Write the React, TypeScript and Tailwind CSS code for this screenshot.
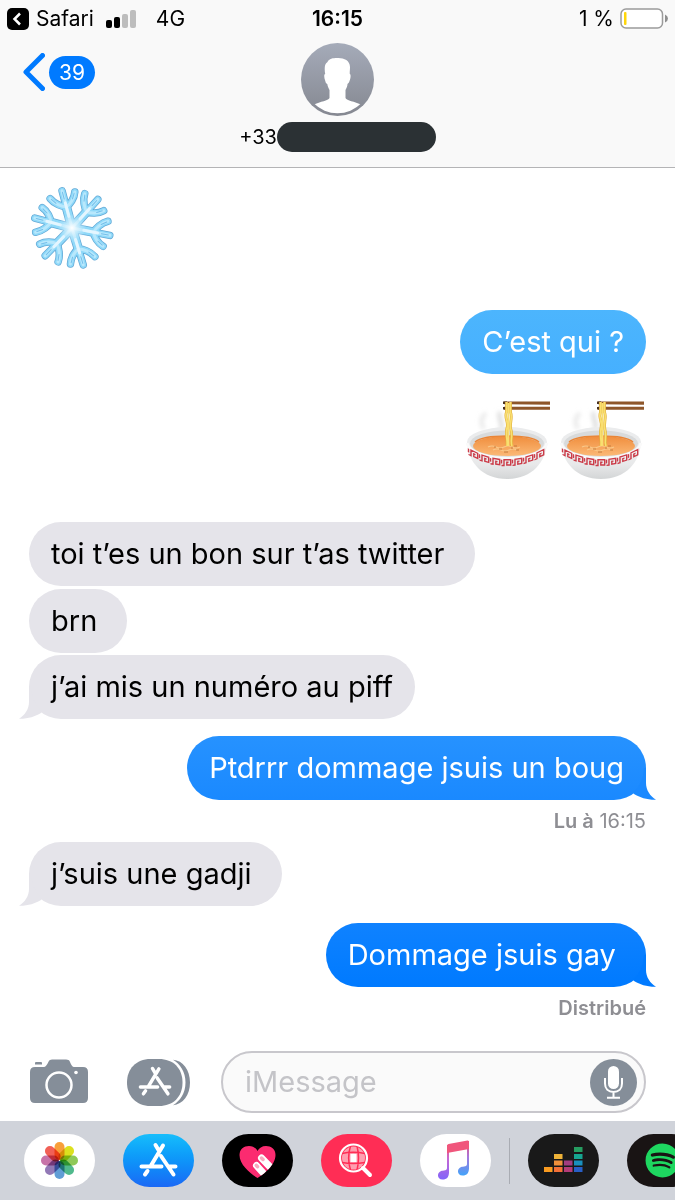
import type { ReactNode } from 'react';
import { FaSpotify } from 'react-icons/fa';

type Message = {
  text: string;
  mine?: boolean;
  tail?: boolean;
  color: string;
  tailColor?: string;
  spacing: string;
  receipt?: ReactNode;
};

// a trailing space typed by the sender is kept, it widens the bubble
const messages: Message[] = [
  { text: 'toi t’es un bon sur t’as twitter ', color: 'bg-[#e5e4ea] text-black', spacing: 'mt-[42px]' },
  { text: 'brn ', color: 'bg-[#e5e4ea] text-black', spacing: 'mt-[3px]' },
  {
    text: 'j’ai mis un numéro au piff',
    tail: true,
    color: 'bg-[#e5e4ea] text-black',
    tailColor: 'text-[#e5e4ea]',
    spacing: 'mt-[2px]',
  },
  {
    text: 'Ptdrrr dommage jsuis un boug',
    mine: true,
    tail: true,
    color: 'bg-linear-to-b from-[#2692ff] to-[#1a89ff] text-white',
    tailColor: 'text-[#1a89ff]',
    spacing: 'mt-[17px]',
    receipt: (
      <>
        <span className="font-semibold">Lu à</span> 16:15
      </>
    ),
  },
  {
    text: 'j’suis une gadji ',
    tail: true,
    color: 'bg-[#e5e4ea] text-black',
    tailColor: 'text-[#e5e4ea]',
    spacing: 'mt-0',
  },
  {
    text: 'Dommage jsuis gay ',
    mine: true,
    tail: true,
    color: 'bg-linear-to-b from-[#0f82ff] to-[#007aff] text-white',
    tailColor: 'text-[#007aff]',
    spacing: 'mt-[17px]',
    receipt: <span className="font-semibold">Distribué</span>,
  },
];

function Bubble({ text, mine, tail, color, tailColor }: Message) {
  return (
    <div className={`relative h-16 rounded-[32px] px-[22px] text-[29px] leading-[64px] whitespace-pre ${color}`}>
      {tail && (
        <svg
          viewBox="0 0 24 32"
          className={`absolute bottom-0 h-8 w-6 ${mine ? '-right-[10px]' : '-left-[10px] -scale-x-100'} ${tailColor}`}
          fill="currentColor"
          aria-hidden="true"
        >
          <path d="M14 0V15C14 22 18 28 24 31.8C15 32 8 29.5 2 26L1 25Q11 16 12 0Z" />
        </svg>
      )}
      <span className="relative">{text}</span>
    </div>
  );
}

function Snowflake() {
  const arms = [-15, 42, 101, 163, 224, 285];
  const arm = 'M0 0V-38.500M0-22C-4-23-11-28-13.500-34M0-22C4-23 10-28 12-34';
  return (
    <svg viewBox="-43 -43 86 86" className="h-[86px] w-[86px]" fill="none" strokeLinecap="round" role="img" aria-label="Flocon">
      <defs>
        <radialGradient id="snow-glow">
          <stop offset="0" stopColor="#ffffff" />
          <stop offset="1" stopColor="#c4e9fc" stopOpacity="0" />
        </radialGradient>
      </defs>
      {arms.map((a) => (
        <g key={a} transform={`rotate(${a})`} stroke="#63a9d6">
          <path d={arm} strokeWidth="7.500" />
          <path d="M0 0V-22" strokeWidth="9.500" />
        </g>
      ))}
      {arms.map((a) => (
        <g key={a} transform={`rotate(${a})`} stroke="#8fd9f9">
          <path d={arm} strokeWidth="6" />
          <path d="M0 0V-22" strokeWidth="8" />
        </g>
      ))}
      {arms.map((a) => (
        <g key={a} transform={`rotate(${a})`}>
          <path d={arm} stroke="#b9e8fc" strokeWidth="3" />
          <path d="M0-12V-26" stroke="#e4f6ff" strokeWidth="3" />
          <path d="M0-30V-37M-9-28L-12.500-33M8-28L11-33" stroke="#74bfea" strokeWidth="1" />
        </g>
      ))}
      <circle r="15" fill="url(#snow-glow)" />
    </svg>
  );
}

function Ramen({ id }: { id: string }) {
  const pattern = [-33, -22, -11, 0, 11, 22, 33];
  return (
    <svg viewBox="0 0 86 80" className="h-20 w-[86px]" fill="none" role="img" aria-label="Ramen">
      <defs>
        <linearGradient id={`${id}-bowl`} x1="0" y1="0" x2="0" y2="1">
          <stop offset="0" stopColor="#f0f0f0" />
          <stop offset="0.6" stopColor="#e8e9ea" />
          <stop offset="1" stopColor="#d3d5d6" />
        </linearGradient>
        <linearGradient id={`${id}-soup`} x1="0" y1="0" x2="0" y2="1">
          <stop offset="0" stopColor="#f08d3c" />
          <stop offset="1" stopColor="#fbb977" />
        </linearGradient>
        <filter id={`${id}-blur`} x="-50%" y="-50%" width="200%" height="200%">
          <feGaussianBlur stdDeviation="2" />
        </filter>
      </defs>
      <g filter={`url(#${id}-blur)`} stroke="#dcdcdc" strokeWidth="4">
        <path d="M20 13C14 18 15 24 18 29" opacity="0.6" />
        <path d="M34 12C31 18 38 22 35 30" />
      </g>
      <path d="M1 42C2 62 16 79 41 79S80 62 81 42Z" fill={`url(#${id}-bowl)`} />
      <ellipse cx="41" cy="42" rx="40" ry="15" fill="#ebeced" />
      <ellipse cx="41" cy="43.500" rx="37" ry="13" fill="#d8dadb" />
      <ellipse cx="41" cy="46" rx="34" ry="10" fill={`url(#${id}-soup)`} />
      <path d="M9 42C18 34 64 34 73 42" stroke="#ea8536" strokeWidth="1.500" />
      <path
        d="M22 47q4-2 8 0t8 0t8 0t8 0M27 50q4-2 8 0t8 0t8 0"
        stroke="#f9c98a"
        strokeWidth="1.200"
      />
      <path d="M28 47h2M33 49h3M48 46h3M50 50h3M38 52h4M45 48h2" stroke="#c47b3a" strokeWidth="1" />
      <path d="M1 43C3 52 20 58.500 41 58.500S79 52 81 43" stroke="#fafafa" strokeWidth="3" />
      {pattern.map((x) => (
        <path
          key={x}
          transform={`translate(${41 + x} ${62.5 - (x * x) / 130}) skewY(${-x * 0.8})`}
          d="M-5.500 3H-3V-2.700H3.700V2.500H-0.200V-.2H1.500M-5.500-2.700V1"
          stroke="#cb3b48"
          strokeWidth="1.400"
        />
      ))}
      <path d="M38 1.500H84V4.700L38 4.200ZM38 6.700H84V9.700H38Z" fill="#8e562a" />
      <path d="M37 2.800h4M37 8.200h4" stroke="#49311f" strokeWidth="2.500" />
      <path
        d="M40.500 2V12C38 18 43 22 41 28C39 35 42 39 41 46M44.500 2V12C47 18 43 24 45 30C47 36 44 41 46 46"
        stroke="#e1ac37"
        strokeWidth="2.800"
      />
      <path
        d="M40.500 2V12C38 18 43 22 41 28C39 35 42 39 41 46M44.500 2V12C47 18 43 24 45 30C47 36 44 41 46 46M42.500 3V46"
        stroke="#f9df70"
        strokeWidth="1.700"
      />
    </svg>
  );
}

function Avatar() {
  return (
    <svg viewBox="0 0 73 73" className="h-[73px] w-[73px]" aria-hidden="true">
      <defs>
        <linearGradient id="avatar-bg" x1="0" y1="0" x2="0" y2="1">
          <stop offset="0" stopColor="#a5abb9" />
          <stop offset="1" stopColor="#858891" />
        </linearGradient>
        <clipPath id="avatar-clip">
          <circle cx="36.5" cy="36.5" r="33.7" />
        </clipPath>
      </defs>
      <circle cx="36.5" cy="36.5" r="36.5" fill="url(#avatar-bg)" />
      <path
        clipPath="url(#avatar-clip)"
        fill="#fff"
        d="M36 15C42 14.5 49 17 49 24C49 27 48.6 29 48.8 31C50 31 49.8 35 48.5 38C48 40 47 40.5 46.5 41C46.5 43 45.5 45 44.5 47V55C46 58 53 58 61 62L68 73H4L12 62C20 58 27 58 28.5 55V47C27.5 45 26.5 43 26.3 41C25 40.5 24.8 40 24.3 38C23 35 22.8 31 24.2 31C23.5 27 23 21 26.5 19C28 15.5 32 15 36 15Z"
      />
    </svg>
  );
}

function AppStoreGlyph() {
  return (
    <path
      d="M40 11.5L28 31.5M32.5 11L35.5 16M38 22L50.5 40.5M24.5 37L22 40.5M18.5 32.5H38.5M46 32.5H52.5"
      stroke="#fff"
      strokeWidth="4"
      strokeLinecap="round"
      fill="none"
    />
  );
}

function CameraIcon() {
  return (
    <svg viewBox="0 0 58 46" className="h-[46px] w-[58px]" fill="#858e99" aria-hidden="true">
      <path d="M6 3H11Q12 3 12 4V5.500H5V4Q5 3 6 3Z" />
      <path d="M5 8H14C17 8 18 2 20 1Q21 .5 22 .5H36Q37.5 .5 38.5 1C40.5 2 41 8 44 8H53Q58 8 58 13V39Q58 44 53 44H5Q0 44 0 39V13Q0 8 5 8Z" />
      <circle cx="29" cy="26" r="12.5" fill="none" stroke="#fff" strokeWidth="2.5" />
      <circle cx="46" cy="13.5" r="1.8" fill="#fff" />
    </svg>
  );
}

function AppsIcon() {
  return (
    <svg viewBox="0 0 63 47" className="h-[47px] w-[63px]" aria-hidden="true">
      <path d="M46 0.8C56 1.5 63 11 63 23.5S56 45.5 46 46.2C53 42 58.5 34 58.5 23.5S53 5 46 0.8Z" fill="#858e99" />
      <path d="M23.5 0H32C46 0 55.5 9 55.5 23.5S46 47 32 47H23.5C9 47 0 37 0 23.5S9 0 23.5 0Z" fill="#858e99" />
      <g transform="translate(-2.5 0) scale(0.86)">
        <AppStoreGlyph />
      </g>
    </svg>
  );
}

function MicIcon() {
  return (
    <svg viewBox="0 0 47 47" className="h-[47px] w-[47px]" fill="none" stroke="#fff" aria-hidden="true">
      <circle cx="23.5" cy="23.5" r="23.5" fill="#858e99" stroke="none" />
      <rect x="18" y="7" width="11" height="23" rx="5.5" fill="#fff" stroke="none" />
      <path d="M15 19V24.5C15 30 18.5 33 23.5 33S32 30 32 24.5V19M23.5 33V38.5M17 38.8H30" strokeWidth="2" />
    </svg>
  );
}

function PhotosIcon() {
  const petals = ['#f8921e', '#d8dc00', '#7fc241', '#37b07c', '#4a90d0', '#8366ac', '#c0609c', '#f04a3e'];
  return (
    <svg viewBox="0 0 71 53" className="h-full w-full" aria-hidden="true">
      {petals.map((fill, i) => (
        <rect
          key={fill}
          x="30.5"
          y="8"
          width="10"
          height="18"
          rx="5"
          fill={fill}
          opacity="0.88"
          className="mix-blend-multiply"
          transform={`rotate(${i * 45} 35.5 26.5)`}
        />
      ))}
    </svg>
  );
}

function HeartIcon() {
  return (
    <svg viewBox="0 0 71 53" className="h-full w-full" aria-hidden="true">
      <defs>
        <clipPath id="heart">
          <path d="M35.5 44C29 40 17.500 31 17.500 21C17.500 15 22 12 27 12C31 12 34 14 35.500 17C37 14 40 12 44 12C49 12 53.500 15 53.500 21C53.500 31 42 40 35.500 44Z" />
        </clipPath>
      </defs>
      <g clipPath="url(#heart)">
        <rect width="71" height="53" fill="#fb2b70" />
        <g stroke="#fff" strokeWidth="7" strokeLinecap="round">
          <path d="M34.500 31.500L44 42M39.500 24L51 36" />
        </g>
        <path d="M34.300 31.300L35.500 32.700M39.500 24L41 25.500" stroke="#f9a8bf" strokeWidth="3.500" strokeLinecap="round" />
      </g>
    </svg>
  );
}

function SearchGlobeIcon() {
  return (
    <svg viewBox="0 0 71 53" className="h-full w-full" fill="none" stroke="#fff" aria-hidden="true">
      <circle cx="32.500" cy="24" r="11.500" fill="#ff9fb0" stroke="none" />
      <path d="M29.500 20H35.500V28H29.500Z" fill="#fff" stroke="none" />
      <path
        d="M29.500 12C27 20 27 28 29.500 36M36 12C38 20 38 28 36 36M21 19.500Q32 17 44 19.500M21 28.500Q32 30.500 44 28.500"
        stroke="#ff2d55"
        strokeWidth="1.500"
      />
      <circle cx="32.500" cy="24" r="13.500" strokeWidth="2.200" />
      <path d="M42 34L49 41" strokeWidth="4" strokeLinecap="round" />
    </svg>
  );
}

function MusicIcon() {
  return (
    <svg viewBox="0 0 71 53" className="h-full w-full" aria-hidden="true">
      <defs>
        <linearGradient id="music-left" x1="0" y1="0" x2="0" y2="1">
          <stop offset="0" stopColor="#f45478" />
          <stop offset="0.4" stopColor="#c568d5" />
          <stop offset="1" stopColor="#8265fa" />
        </linearGradient>
        <linearGradient id="music-right" x1="0" y1="0" x2="0" y2="1">
          <stop offset="0" stopColor="#f45070" />
          <stop offset="0.45" stopColor="#a875db" />
          <stop offset="1" stopColor="#42a4fa" />
        </linearGradient>
      </defs>
      <path d="M27 11H29V38C29 43 27 45.500 22.500 45.500C19.500 45.500 18 43.800 18 41.500C18 38 21 36.700 24 36.500Q27 36.300 27 34Z" fill="url(#music-left)" />
      <path d="M47 7H49V34C49 39 47 41.500 42.500 41.500C39.500 41.500 38 39.800 38 37.500C38 34 41 32.700 44 32.500Q47 32.300 47 30Z" fill="url(#music-right)" />
      <path d="M27 12Q27 10.300 28.500 10L47.500 6.500Q49 6.300 49 8V15L27 19Z" fill="#f0567c" />
    </svg>
  );
}

function EqualizerIcon() {
  const bars = [
    [16, 33, '#f99b20'],
    [26, 20, '#eeb338'],
    [26, 26.5, '#ef8f3a'],
    [26, 33, '#f37037'],
    [36, 26.5, '#a23c80'],
    [36, 33, '#b43b78'],
    [46, 13, '#269d61'],
    [46, 20, '#16a590'],
    [46, 26.5, '#1990bd'],
    [46, 33, '#285fc7'],
  ] as const;
  return (
    <svg viewBox="0 0 71 53" className="h-full w-full" aria-hidden="true">
      {bars.map(([x, y, fill]) => (
        <rect key={`${x}-${y}`} x={x} y={y} width="8.5" height="5" fill={fill} />
      ))}
    </svg>
  );
}

function DockApp({ label, color, children }: { label: string; color: string; children: ReactNode }) {
  return (
    <button aria-label={label} className={`h-[53px] w-[71px] shrink-0 overflow-hidden rounded-full ${color}`}>
      {children}
    </button>
  );
}

function StatusBar() {
  return (
    <div className="grid h-[37px] grid-cols-3 items-center px-[7px] text-[21px]">
      <div className="flex items-center">
        <svg viewBox="0 0 22 22" className="h-[22px] w-[22px]" aria-hidden="true">
          <rect width="22" height="22" rx="5" fill="#000" />
          <path d="M13 5.500L7.500 11L13 16.500" fill="none" stroke="#fff" strokeWidth="2.500" />
        </svg>
        <span className="ml-[7px]">Safari</span>
        <svg viewBox="0 0 30 18" className="ml-3 h-[18px] w-[30px]" aria-hidden="true">
          <rect x="0" y="10" width="6" height="8" rx="2" />
          <rect x="8" y="7" width="6" height="11" rx="2" />
          <rect x="16" y="4" width="6" height="14" rx="2" fill="#bdbdbd" />
          <rect x="24" y="0" width="6" height="18" rx="2" fill="#bdbdbd" />
        </svg>
        <span className="ml-5">4G</span>
      </div>
      <span className="text-center font-semibold">16:15</span>
      <div className="flex items-center justify-end gap-1.5">
        <span>1 %</span>
        <svg viewBox="0 0 48 21" className="h-[21px] w-12" aria-hidden="true">
          <rect x="1" y="1" width="41.500" height="19" rx="5" fill="#fff" stroke="#9b9b9b" strokeWidth="1.500" />
          <rect x="4" y="4" width="2.500" height="13" rx="1" fill="#ffd60a" />
          <path d="M45 6.500Q48 8 48 10.500T45 14.500Z" fill="#8e8e8e" />
        </svg>
      </div>
    </div>
  );
}

export default function App() {
  return (
    <div className="flex min-h-screen flex-col overflow-hidden bg-white font-['Inter',sans-serif] text-black">
      <header className="border-b border-[#b4b4b6] bg-[#f9f9f9]">
        <StatusBar />
        <div className="grid h-[130px] grid-cols-3 items-start">
          <button aria-label="Retour, 39 messages" className="mt-4 ml-[23px] flex items-center gap-1 justify-self-start">
            <svg viewBox="0 0 22 38" className="h-[38px] w-[22px]" fill="none" aria-hidden="true">
              <path d="M19.500 2.500L3 19L19.500 35.500" stroke="#007aff" strokeWidth="5" strokeLinecap="round" strokeLinejoin="round" />
            </svg>
            <span className="rounded-full bg-[#007aff] px-[10px] text-[21px] leading-[33px] text-white">39</span>
          </button>
          <div className="mt-1.5 flex flex-col items-center">
            <Avatar />
            <div className="mt-1.5 flex items-center text-[20px] whitespace-nowrap">
              +33
              <span className="h-[30px] w-[159px] rounded-full bg-[#2b3134]" />
            </div>
          </div>
        </div>
      </header>

      <main className="flex flex-1 flex-col px-[29px] pt-[17px]">
        <Snowflake />
        <div className="mt-[39px] flex justify-end">
          <Bubble
            text="C’est qui ?"
            mine
            color="bg-linear-to-b from-[#4cb5fd] to-[#46b0ff] text-white"
            spacing="mt-0"
          />
        </div>
        <div className="mt-[26px] flex justify-end gap-2">
          <Ramen id="ramen-a" />
          <Ramen id="ramen-b" />
        </div>
        {messages.map((message) => (
          <div key={message.text} className={`flex flex-col ${message.mine ? 'items-end' : 'items-start'} ${message.spacing}`}>
            <Bubble {...message} />
            {message.receipt && (
              <p className="text-[20px] leading-[42px] text-[#8e8e93]">{message.receipt}</p>
            )}
          </div>
        ))}
      </main>

      <form className="flex items-center pr-[29px] pb-2 pl-[30px]" onSubmit={(e) => e.preventDefault()}>
        <button type="button" aria-label="Appareil photo">
          <CameraIcon />
        </button>
        <button type="button" aria-label="Applications" className="ml-[39px]">
          <AppsIcon />
        </button>
        <div className="ml-[31px] flex h-[62px] min-w-0 flex-1 items-center rounded-full border-2 border-[#c8c7cc] bg-[#fafafa] pr-[7px] pl-[22px]">
          <input
            type="text"
            aria-label="iMessage"
            placeholder="iMessage"
            className="min-w-0 flex-1 bg-transparent text-[29px] outline-none placeholder:text-[#c4c4c8]"
          />
          <button type="button" aria-label="Dicter">
            <MicIcon />
          </button>
        </div>
      </form>

      <footer className="flex items-center gap-[18px] overflow-hidden bg-[#d0d3da] py-[13px] pl-6">
        <div className="flex gap-7">
          <DockApp label="Photos" color="bg-white">
            <PhotosIcon />
          </DockApp>
          <DockApp label="App Store" color="bg-linear-to-b from-[#18bdfb] to-[#1b68f5]">
            <svg viewBox="0 0 71 53" className="h-full w-full" aria-hidden="true">
              <AppStoreGlyph />
            </svg>
          </DockApp>
          <DockApp label="Digital Touch" color="bg-black">
            <HeartIcon />
          </DockApp>
          <DockApp label="Images" color="bg-[#ff2d55]">
            <SearchGlobeIcon />
          </DockApp>
          <DockApp label="Musique" color="bg-white">
            <MusicIcon />
          </DockApp>
        </div>
        <div className="h-[46px] w-px shrink-0 bg-[#a9acb3]" />
        <div className="flex gap-7">
          <DockApp label="Deezer" color="bg-[#191919]">
            <EqualizerIcon />
          </DockApp>
          <DockApp label="Spotify" color="bg-[#191414]">
            <FaSpotify className="mx-auto h-[35px] w-[35px] text-[#1ed760]" />
          </DockApp>
        </div>
      </footer>
    </div>
  );
}
